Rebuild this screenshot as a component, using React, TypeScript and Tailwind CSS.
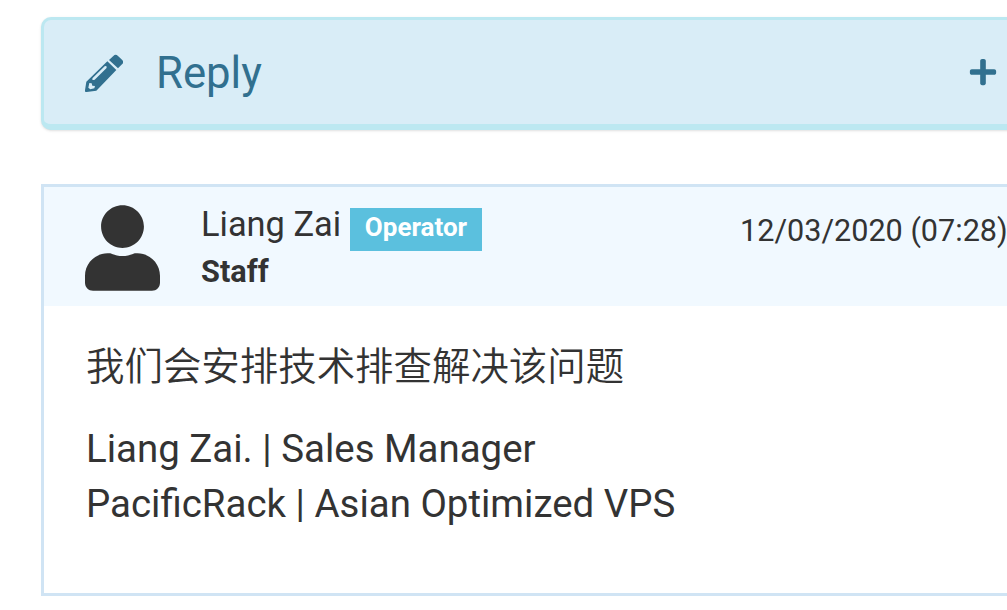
import { FaPlus, FaUser } from "react-icons/fa";

function PencilIcon({ className }: { className?: string }) {
  return (
    <svg viewBox="15 18 114 114" className={className} aria-hidden="true">
      <path fill="currentColor" d="M100 24Q107 17 114 24L126 35Q133 42 126 49L114 61L87 36Z" />
      <path
        fill="currentColor"
        fillRule="evenodd"
        d="M82 40L109 66L49 128L20 132Q14 133 15 127L19 101ZM74 55L38 90Q36 94 38 96Q41 97 44 95L79 61Q81 57 79 55Q77 53 74 55ZM28 105L25 119L31 124L43 121L45 114L37 113L35 106Z"
      />
    </svg>
  );
}

export default function App() {
  return (
    <main className="h-[610px] w-[1007px] overflow-hidden bg-white pl-[41px] pt-[17px] font-['Roboto','Noto_Sans_CJK_SC',sans-serif] text-[#333]">
      <section className="flex h-[113px] w-[1000px] items-center rounded-[10px] border-[3px] border-b-[6px] border-[#bce8f1] bg-[#d9edf7] pl-[41px] text-[#31708f] shadow-sm">
        <PencilIcon className="mt-0.5 size-[38px]" />
        <h1 className="ml-[33px] mt-0.5 w-[812px] text-[43.7px] leading-[60px]">Reply</h1>
        <FaPlus className="size-[30px]" />
      </section>
      <article className="mt-[54px] h-[412px] w-[1000px] border-[3px] border-[#d0e4f4] bg-white">
        <header className="flex h-[119px] items-start bg-[#f1f9ff] pl-[41px]">
          <FaUser className="mt-[18px] h-[86px] w-[75px]" />
          <div className="ml-[41px] w-[540px] pt-[14px]">
            <div className="flex h-[48px] items-start">
              <span className="w-[140px] whitespace-nowrap text-[34.4px] leading-[46px]">Liang Zai</span>
              <span className="ml-[9px] mt-[7px] h-[43px] w-[132px] bg-[#5bc0de] text-center text-[26px] font-bold leading-[39px] text-white">Operator</span>
            </div>
            <strong className="block text-[30.7px] leading-[45px]">Staff</strong>
          </div>
          <time className="-ml-px mt-[23px] whitespace-nowrap text-[30.6px] leading-[42px]">12/03/2020 (07:28)</time>
        </header>
        <div className="pl-[42px] pt-[33px] text-[38.45px] leading-[55px]">
          <p className="font-[350]">我们会安排技术排查解决该问题</p>
          <p className="mt-[27px]">Liang Zai. | Sales Manager<br />PacificRack | Asian Optimized VPS</p>
        </div>
      </article>
    </main>
  );
}
